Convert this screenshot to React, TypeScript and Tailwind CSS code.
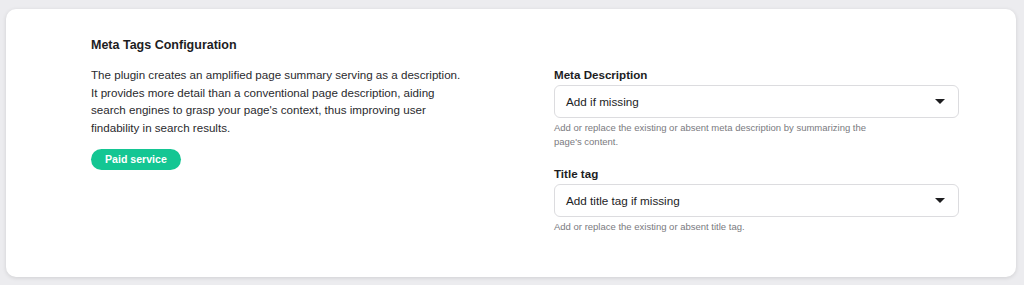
const font = { fontFamily: '"Liberation Sans", Arial, sans-serif' };

function SelectField({
  label,
  value,
  help,
}: {
  label: string;
  value: string;
  help: string;
}) {
  return (
    <div>
      <p className="text-[11.6px] font-bold leading-[15px] text-[#1d1d1f]">{label}</p>
      <div className="mt-[3px] flex h-[33px] items-center justify-between rounded-[6px] border border-[#dcdcdf] bg-white pl-[11px] pr-[12px]">
        <span className="text-[11.7px] text-[#1d1d1f]">{value}</span>
        <svg width="10" height="5" viewBox="0 0 10 5" className="mr-[1px]">
          <path d="M0 0h10L5 5z" fill="#1d1d1f" />
        </svg>
      </div>
      <p className="mt-[3px] max-w-[332px] text-[9.5px] leading-[14px] text-[#7a7a80]">{help}</p>
    </div>
  );
}

export default function App() {
  return (
    <div className="h-[285px] w-full bg-[#ececef] pl-[6px] pr-[8px] pt-[9px]" style={font}>
      <div className="flex h-[268px] rounded-[10px] bg-white pl-[85px] pr-[57px] pt-[28px] shadow-[0_1px_4px_rgba(0,0,0,0.12)]">
        <div className="w-[374px]">
          <h2 className="text-[12.5px] font-bold leading-[16px] text-[#1d1d1f]">
            Meta Tags Configuration
          </h2>
          <p className="mt-[13px] text-[11.6px] leading-[17.5px] text-[#2a2a2e]">
            The plugin creates an amplified page summary serving as a description.
            It provides more detail than a conventional page description, aiding
            search engines to grasp your page's context, thus improving user
            findability in search results.
          </p>
          <span className="mt-[13px] inline-flex h-[21px] items-center rounded-full bg-[#14c693] px-[14px] text-[10.6px] font-bold text-white">
            Paid service
          </span>
        </div>
        <div className="ml-auto w-[405px] pt-[30px]">
          <SelectField
            label="Meta Description"
            value="Add if missing"
            help="Add or replace the existing or absent meta description by summarizing the page's content."
          />
          <div className="mt-[17px]">
            <SelectField
              label="Title tag"
              value="Add title tag if missing"
              help="Add or replace the existing or absent title tag."
            />
          </div>
        </div>
      </div>
    </div>
  );
}
